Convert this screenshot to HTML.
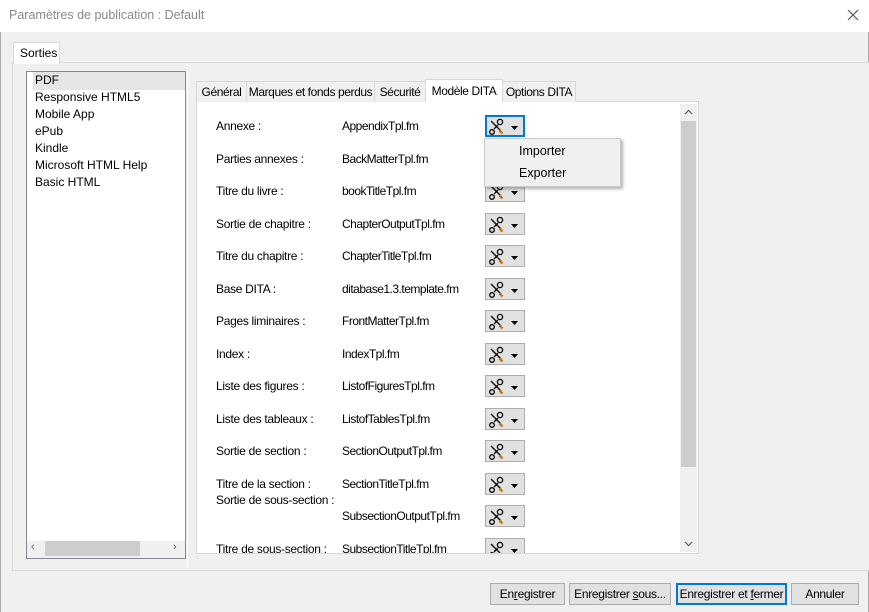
<!DOCTYPE html><html><head><style>
*{margin:0;padding:0;box-sizing:border-box}
html,body{width:869px;height:612px}
body{background:#f0f0f0;font-family:"Liberation Sans",sans-serif;font-size:12px;color:#000;position:relative;overflow:hidden}
.a{position:absolute}
.t{white-space:nowrap}
.btn{position:absolute;height:22px;border:1px solid #adadad;background:#e1e1e1;text-align:center;line-height:20px;white-space:nowrap;letter-spacing:-0.3px;overflow:hidden}
.ib{position:absolute;left:485px;width:40px;height:22px;border:1px solid #adadad;background:#e1e1e1}
.row{position:absolute;left:216px;white-space:nowrap;letter-spacing:-0.3px}
.val{position:absolute;left:342px;white-space:nowrap;letter-spacing:-0.5px}
.tab{position:absolute;top:81px;height:21px;border:1px solid #d9d9d9;border-bottom:none;background:#f0f0f0;line-height:20px;white-space:nowrap;text-align:center;letter-spacing:-0.4px;overflow:hidden}
</style></head><body>
<div class="a" style="left:0;top:0;width:869px;height:32px;background:#fff"></div>
<div class="a t" style="left:9px;top:8px;font-size:12.5px;color:#8a8a8a">Paramètres de publication : Default</div>
<svg class="a" style="left:847px;top:9px" width="12" height="12"><path d="M1 1L11 11M11 1L1 11" stroke="#555" stroke-width="1.2"/></svg>
<div class="a" style="left:0;top:32px;width:1px;height:580px;background:#aaa"></div>
<div class="a" style="left:868px;top:32px;width:1px;height:580px;background:#aaa"></div>
<div class="a" style="left:12px;top:62px;width:870px;height:509px;border:1px solid #d9d9d9;background:#fff"></div>
<div class="a" style="left:13px;top:63px;width:870px;height:507px;background:#f0f0f0"></div>
<div class="a t" style="left:13px;top:42px;width:47px;height:22px;border:1px solid #d9d9d9;border-bottom:none;background:#fff;padding-left:6px;line-height:20px">Sorties</div>
<div class="a" style="left:26px;top:71px;width:160px;height:488px;border:1px solid #828790;background:#fff"></div>
<div class="a" style="left:33px;top:72px;width:152px;height:18px;background:#e5e5e5"></div>
<div class="a t" style="left:35px;top:72px;line-height:17px">PDF<br>Responsive HTML5<br>Mobile App<br>ePub<br>Kindle<br>Microsoft HTML Help<br>Basic HTML</div>
<div class="a" style="left:27px;top:541px;width:158px;height:17px;background:#f0f0f0"></div>
<div class="a" style="left:45px;top:541px;width:95px;height:15px;background:#cdcdcd"></div>
<div class="a t" style="left:31px;top:541px;color:#606060;font-size:11px">&lsaquo;</div>
<div class="a t" style="left:173px;top:541px;color:#606060;font-size:11px">&rsaquo;</div>
<div class="a" style="left:187px;top:71px;width:1px;height:497px;background:#fff"></div>
<div class="a" style="left:196px;top:101px;width:503px;height:453px;border:1px solid #d9d9d9;background:#fff"></div>
<div class="tab" style="left:196px;width:51px">Général</div>
<div class="tab" style="left:246px;width:129px">Marques et fonds perdus</div>
<div class="tab" style="left:374px;width:52px">Sécurité</div>
<div class="tab" style="left:425px;top:79px;width:78px;height:23px;background:#fff;padding-top:1px">Modèle DITA</div>
<div class="tab" style="left:502px;width:74px">Options DITA</div>
<div class="a" style="left:680px;top:104px;width:17px;height:448px;background:#f0f0f0"></div>
<div class="a" style="left:681px;top:121px;width:15px;height:346px;background:#cdcdcd"></div>
<svg class="a" style="left:684px;top:109px" width="9" height="6"><path d="M1 5L4.5 1.5L8 5" fill="none" stroke="#606060" stroke-width="1.2"/></svg>
<svg class="a" style="left:684px;top:541px" width="9" height="6"><path d="M1 1L4.5 4.5L8 1" fill="none" stroke="#606060" stroke-width="1.2"/></svg>
<div class="a" style="left:197px;top:102px;width:483px;height:451px;overflow:hidden">
<div style="position:absolute;left:-197px;top:-102px;width:869px;height:612px">
<div class="row" style="top:119px">Annexe :</div><div class="val" style="top:119px">AppendixTpl.fm</div>
<div class="row" style="top:152px">Parties annexes :</div><div class="val" style="top:152px">BackMatterTpl.fm</div>
<div class="row" style="top:184px">Titre du livre :</div><div class="val" style="top:184px">bookTitleTpl.fm</div>
<div class="row" style="top:217px">Sortie de chapitre :</div><div class="val" style="top:217px">ChapterOutputTpl.fm</div>
<div class="row" style="top:249px">Titre du chapitre :</div><div class="val" style="top:249px">ChapterTitleTpl.fm</div>
<div class="row" style="top:282px">Base DITA :</div><div class="val" style="top:282px">ditabase1.3.template.fm</div>
<div class="row" style="top:314px">Pages liminaires :</div><div class="val" style="top:314px">FrontMatterTpl.fm</div>
<div class="row" style="top:347px">Index :</div><div class="val" style="top:347px">IndexTpl.fm</div>
<div class="row" style="top:379px">Liste des figures :</div><div class="val" style="top:379px">ListofFiguresTpl.fm</div>
<div class="row" style="top:412px">Liste des tableaux :</div><div class="val" style="top:412px">ListofTablesTpl.fm</div>
<div class="row" style="top:444px">Sortie de section :</div><div class="val" style="top:444px">SectionOutputTpl.fm</div>
<div class="row" style="top:477px">Titre de la section :</div><div class="val" style="top:477px">SectionTitleTpl.fm</div>
<div class="row" style="top:493px">Sortie de sous-section :</div>
<div class="val" style="top:509px">SubsectionOutputTpl.fm</div>
<div class="row" style="top:542px">Titre de sous-section :</div><div class="val" style="top:542px">SubsectionTitleTpl.fm</div>
<div id="btns"></div>
</div></div>
<div class="a" style="left:484px;top:138px;width:137px;height:49px;background:#f0f0f0;border:1px solid #ccc;box-shadow:2px 2px 3px rgba(0,0,0,0.3)"></div>
<div class="a t" style="left:519px;top:144px;font-size:12.5px">Importer</div>
<div class="a t" style="left:519px;top:166px;font-size:12.5px">Exporter</div>
<div class="btn" style="left:490px;top:583px;width:75px">En<u>r</u>egistrer</div>
<div class="btn" style="left:569px;top:583px;width:102px">Enregistrer <u>s</u>ous...</div>
<div class="btn" style="left:676px;top:583px;width:111px;border:2px solid #0078d7;line-height:18px">Enregistrer et <u>f</u>ermer</div>
<div class="btn" style="left:791px;top:583px;width:68px">Annuler</div>
<script>
var ys=[115,148,180,213,245,278,310,343,375,408,440,473,505,538];
var h='';
ys.forEach(function(y,i){
var b=i==0?'border:2px solid #0078d7;':'';
h+='<div class="ib" style="top:'+y+'px;'+b+'"><svg width="38" height="20" style="position:absolute;left:'+(i==0?0:1)+'px;top:'+(i==0?0:1)+'px"><g fill="none" stroke="#000" stroke-width="1.3"><path d="M4 4L14 14"/><circle cx="5" cy="15" r="2.3"/><circle cx="13" cy="5" r="2.6"/><path d="M11 8L7 12"/></g><path d="M12.5 13.5L15.5 16.5" stroke="#d07010" stroke-width="2.4"/><path d="M24 9h7l-3.5 4z" fill="#000"/></svg></div>';
});
document.getElementById('btns').innerHTML=h;
</script>
</body></html>
